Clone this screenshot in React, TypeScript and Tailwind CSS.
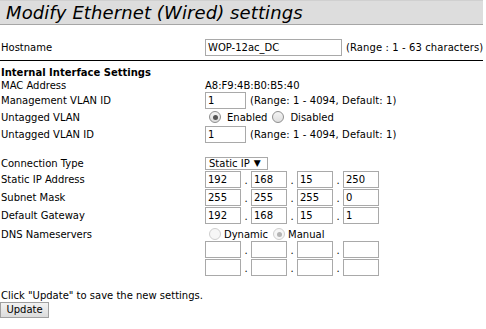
const font = "font-['DejaVu_Sans',Verdana,sans-serif]";

function Row({
  label,
  className = "",
  children,
}: {
  label?: string;
  className?: string;
  children?: React.ReactNode;
}) {
  return (
    <div className={`flex items-center ${className}`}>
      <div className="w-[205px] shrink-0 pl-px">{label}</div>
      <div className="flex items-center">{children}</div>
    </div>
  );
}

function Box({ value = "", w = "w-[36px]" }: { value?: string; w?: string }) {
  return (
    <div
      className={`${w} h-[17px] border border-[#a9a9a9] bg-white pl-[2px] leading-[15px] text-black`}
    >
      {value}
    </div>
  );
}

function IpRow({ values, className = "" }: { values: string[]; className?: string }) {
  return (
    <div className={`flex items-center ${className}`}>
      {values.map((v, i) => (
        <div key={i} className="flex items-center">
          {i > 0 ? (
            <span className="w-[10px] pt-[3px] text-center leading-[14px]">.</span>
          ) : null}
          <Box value={v} />
        </div>
      ))}
    </div>
  );
}

function Radio({ checked, disabled }: { checked?: boolean; disabled?: boolean }) {
  return (
    <span
      className={`flex size-[12px] items-center justify-center rounded-full border ${
        disabled
          ? "border-[#cfcfcf] bg-[#f6f6f6]"
          : "border-[#8e8e8e] bg-gradient-to-b from-[#f4f4f4] to-[#dedede]"
      }`}
    >
      {checked ? (
        <span
          className={`size-[5px] rounded-full ${disabled ? "bg-[#b4b4b4]" : "bg-[#555]"}`}
        />
      ) : null}
    </span>
  );
}

function Range({ text }: { text: string }) {
  return <span className="ml-[4px] tracking-[0.1px]">{text}</span>;
}

export default function App() {
  return (
    <div className={`${font} w-[486px] h-[329px] bg-white text-[10px] text-black`}>
      <div className="mr-[3px] h-[25px] border-t border-b border-t-[#d0d0d0] border-b-[#a6a6a6] bg-[#dddddd] pl-[6px]">
        <h1 className="text-[18px] italic leading-[23px] tracking-[0.1px] text-black">
          Modify Ethernet (Wired) settings
        </h1>
      </div>

      <Row label="Hostname" className="mt-[14px] h-[17px]">
        <Box value="WOP-12ac_DC" w="w-[137px]" />
        <Range text="(Range : 1 - 63 characters)" />
      </Row>

      <div className="mr-[3px] mt-[4px] h-px bg-black" />

      <div className="mt-[5px] h-[13px] pl-px font-bold leading-[13px]">
        Internal Interface Settings
      </div>

      <Row label="MAC Address" className="h-[13px]">
        A8:F9:4B:B0:B5:40
      </Row>

      <Row label="Management VLAN ID" className="h-[17px]">
        <Box value="1" w="w-[41px]" />
        <Range text="(Range: 1 - 4094, Default: 1)" />
      </Row>

      <Row label="Untagged VLAN" className="mt-px h-[14px]">
        <span className="ml-[4px] flex items-center">
          <Radio checked />
          <span className="ml-[6px]">Enabled</span>
          <span className="ml-[5px]">
            <Radio />
          </span>
          <span className="ml-[6px]">Disabled</span>
        </span>
      </Row>

      <Row label="Untagged VLAN ID" className="mt-[2px] h-[17px]">
        <Box value="1" w="w-[41px]" />
        <Range text="(Range: 1 - 4094, Default: 1)" />
      </Row>

      <Row label="Connection Type" className="mt-[14px] h-[13px]">
        <div className="flex h-[13px] w-[63px] items-center border border-[#a9a9a9] bg-white pl-[3px] leading-[11px]">
          <span>Static IP</span>
          <span className="ml-[4px] text-[9px]">▼</span>
        </div>
      </Row>

      <Row label="Static IP Address" className="mt-px h-[17px]">
        <IpRow values={["192", "168", "15", "250"]} />
      </Row>
      <Row label="Subnet Mask" className="mt-px h-[17px]">
        <IpRow values={["255", "255", "255", "0"]} />
      </Row>
      <Row label="Default Gateway" className="mt-px h-[17px]">
        <IpRow values={["192", "168", "15", "1"]} />
      </Row>

      <Row label="DNS Nameservers" className="mt-[3px] h-[14px]">
        <span className="ml-[4px] flex items-center">
          <Radio disabled />
          <span className="ml-[3px]">Dynamic</span>
          <span className="ml-[5px]">
            <Radio checked disabled />
          </span>
          <span className="ml-[3px]">Manual</span>
        </span>
      </Row>
      <Row className="h-[17px]">
        <IpRow values={["", "", "", ""]} />
      </Row>
      <Row className="mt-px h-[17px]">
        <IpRow values={["", "", "", ""]} />
      </Row>

      <div className="mt-[13px] h-[13px] pl-px leading-[13px]">
        Click "Update" to save the new settings.
      </div>
      <button
        type="button"
        className="h-[16px] w-[49px] border border-[#a0a0a0] bg-gradient-to-b from-[#f2f2f2] to-[#dcdcdc] text-center leading-[14px]"
      >
        Update
      </button>
    </div>
  );
}
